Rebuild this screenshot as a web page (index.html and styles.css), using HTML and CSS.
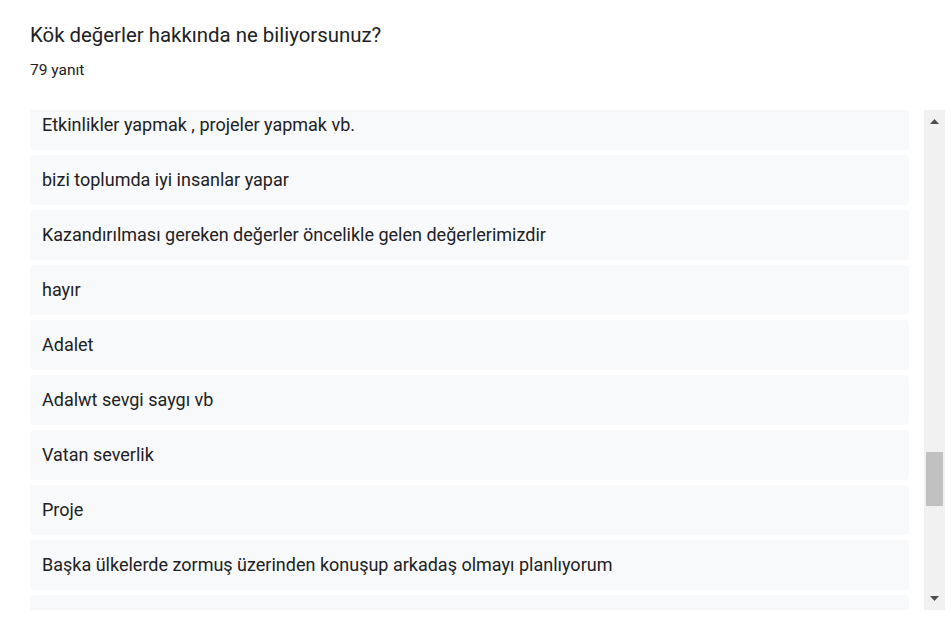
FILE: index.html
```html
<!DOCTYPE html>
<html lang="tr">
<head>
<meta charset="utf-8">
<link rel="stylesheet" href="styles.css">
</head>
<body>
<div class="page">
  <div class="header">
    <div class="title">Kök değerler hakkında ne biliyorsunuz?</div>
    <div class="count">79 yanıt</div>
  </div>
  <div class="panel">
    <div class="viewport">
      <div class="list">
        <div class="card">Etkinlikler yapmak , projeler yapmak vb.</div>
        <div class="card">bizi toplumda iyi insanlar yapar</div>
        <div class="card">Kazandırılması gereken değerler öncelikle gelen değerlerimizdir</div>
        <div class="card">hayır</div>
        <div class="card">Adalet</div>
        <div class="card">Adalwt sevgi saygı vb</div>
        <div class="card">Vatan severlik</div>
        <div class="card">Proje</div>
        <div class="card">Başka ülkelerde zormuş üzerinden konuşup arkadaş olmayı planlıyorum</div>
        <div class="card"></div>
      </div>
    </div>
    <div class="scrollbar">
      <svg class="arrow" width="9" height="5" viewBox="0 0 9 5"><path d="M0 5 L4.5 0 L9 5 Z" fill="#505050"/></svg>
      <div class="track"><div class="thumb"></div></div>
      <svg class="arrow" width="9" height="5" viewBox="0 0 9 5"><path d="M0 0 L4.5 5 L9 0 Z" fill="#505050"/></svg>
    </div>
  </div>
</div>
</body>
</html>
```
FILE: styles.css
```css
* { box-sizing: border-box; }
html, body { margin: 0; padding: 0; background: #fff; }
body {
  font-family: Roboto, "Noto Sans", Arial, sans-serif;
  color: #202124;
}
.page {
  padding: 22px 6px 0 30px;
  width: 951px;
}
.header { height: 88px; }
.title {
  font-size: 20.4px;
  line-height: 26px;
  color: #202124;
}
.count {
  margin-top: 12px;
  font-size: 15.5px;
  line-height: 20px;
  color: #202124;
}
.panel {
  display: flex;
  height: 500px;
}
.viewport {
  flex: 1;
  overflow: hidden;
  padding-right: 15px;
}
.list {
  margin-top: -10px;
  display: flex;
  flex-direction: column;
  gap: 5px;
}
.card {
  background: #f8f9fa;
  border-radius: 4px;
  height: 50px;
  flex: none;
  padding: 0 12px 2px;
  display: flex;
  align-items: center;
  font-size: 18px;
  color: #202124;
  white-space: nowrap;
}
.scrollbar {
  width: 21px;
  background: #f1f1f1;
  display: flex;
  flex-direction: column;
  align-items: center;
}
.arrow { flex: none; margin: 9px 0; }
.track {
  flex: 1;
  width: 100%;
  position: relative;
}
.thumb {
  position: absolute;
  left: 2px;
  right: 2px;
  top: 319px;
  height: 54px;
  background: #c1c1c1;
}
```
